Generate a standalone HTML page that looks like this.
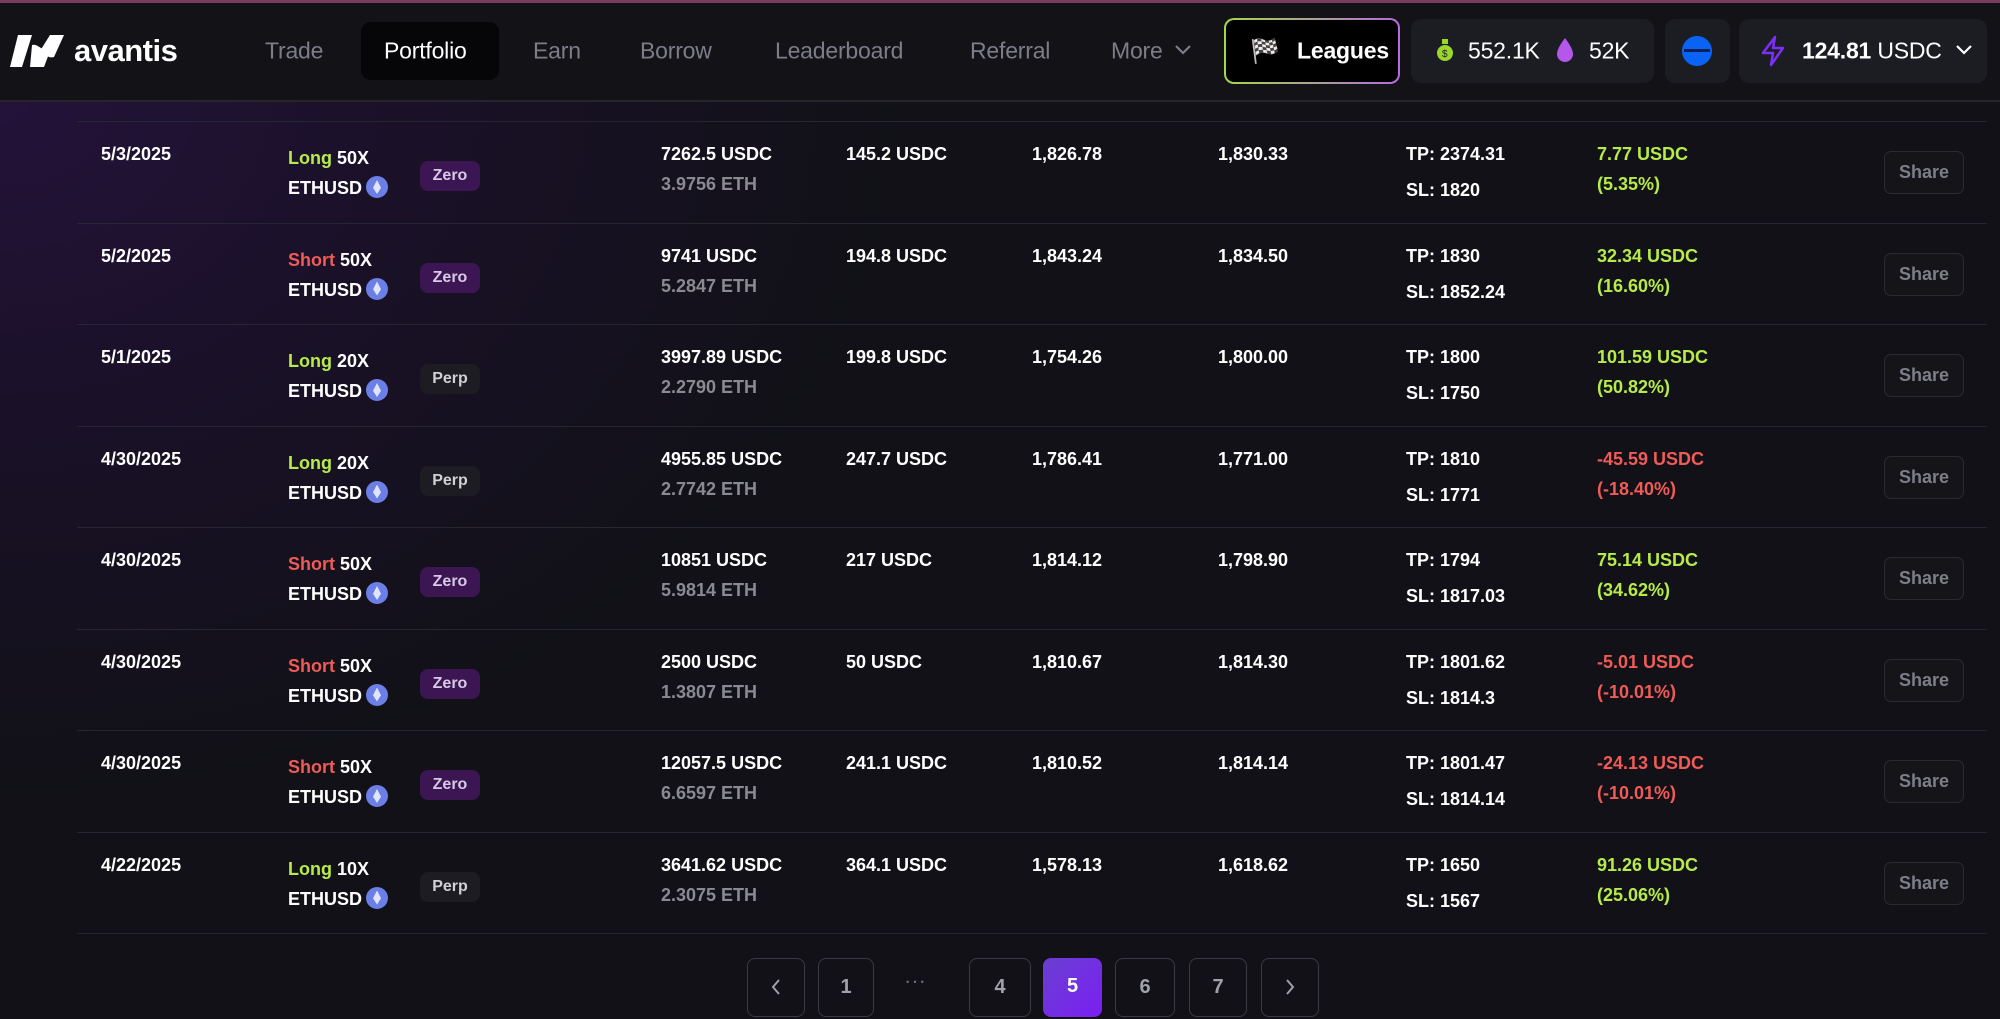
<!DOCTYPE html>
<html><head><meta charset="utf-8"><style>
*{margin:0;padding:0;box-sizing:border-box}
body{width:2000px;height:1019px;overflow:hidden;font-family:"Liberation Sans",sans-serif;color:#fff;
background:radial-gradient(ellipse 900px 700px at 0px 100px,#24123a 0%,#1a1128 45%,#111117 100%);background-color:#111117;position:relative}
.hdr{position:absolute;left:0;top:0;width:2000px;height:102px;background:#121217;border-top:3px solid #7a3a5e;border-bottom:2px solid #25252b}
.a{position:absolute}
.nav{position:absolute;top:51px;transform:translateY(-50%);font-size:23px;color:#7d7d88;letter-spacing:-0.2px}
.box{position:absolute;border-radius:10px;background:#1c1c23}
.row{position:absolute;left:77px;width:1910px;height:102px;border-top:1.5px solid #26262e}
.t{position:absolute;font-size:18px;font-weight:bold;white-space:nowrap;line-height:22px}
.g{color:#b6eb4a}.r{color:#ef5b57}.gr{color:#8a8a93}
.badge{position:absolute;left:343px;top:39px;width:60px;height:30px;border-radius:8px;font-size:16px;font-weight:bold;text-align:center;line-height:30px}
.zero{background:#3b1652;color:#d9c8e8}.perp{background:#1c1c22;color:#d0d0d6}
.eth{display:inline-block;width:22px;height:22px;border-radius:50%;background:#6b7fe6;vertical-align:-4px;margin-left:4px;position:relative}
.eth:after{content:"";position:absolute;left:7px;top:4px;width:8px;height:14px;background:#dfe4ff;clip-path:polygon(50% 0,100% 55%,50% 100%,0 55%)}
.share{position:absolute;left:1807px;top:29px;width:80px;height:43px;border:1.5px solid #2a2a31;border-radius:7px;background:#141419;color:#7e7e88;font-size:18px;font-weight:bold;text-align:center;line-height:40px}
.pg{position:absolute;top:958px;height:59px;border:1.5px solid #3a3a42;border-radius:8px;color:#a0a0aa;font-size:20px;text-align:center;line-height:56px;font-weight:bold}
</style></head><body>
<div class="hdr"></div>
<svg class="a" style="left:10px;top:35px" width="58" height="32" viewBox="0 0 58 32"><path d="M8 0h14L12 32H0z M22 10c6-2 12 8 18 6L34 32H20z M40 0h14L44 22c-6 2-10-4-14-6z" fill="#fff"/></svg>
<div class="a" style="left:74px;top:33px;font-size:31px;font-weight:bold;letter-spacing:-0.5px">avantis</div>
<div class="nav" style="left:265px">Trade</div>
<div class="box" style="left:361px;top:22px;width:138px;height:58px;background:#060608"></div>
<div class="nav" style="left:384px;color:#fff">Portfolio</div>
<div class="nav" style="left:533px">Earn</div>
<div class="nav" style="left:640px">Borrow</div>
<div class="nav" style="left:775px">Leaderboard</div>
<div class="nav" style="left:970px">Referral</div>
<div class="nav" style="left:1111px">More</div>
<svg class="a" style="left:1174px;top:44px" width="18" height="12"><path d="M2 2l7 7 7-7" stroke="#7d7d88" stroke-width="2.2" fill="none"/></svg>
<div class="a" style="left:1224px;top:18px;width:176px;height:66px;border-radius:10px;background:linear-gradient(90deg,#a3d94a,#b46be0);padding:2px"><div style="background:#000;width:100%;height:100%;border-radius:8px"></div></div>
<div class="a" style="left:1250px;top:37px;font-size:24px">🏁</div>
<div class="nav" style="left:1297px;color:#fff;font-weight:bold">Leagues</div>
<div class="box" style="left:1411px;top:19px;width:243px;height:64px"></div>
<svg class="a" style="left:1437px;top:39px" width="16" height="22"><rect x="5" y="0" width="6" height="5" fill="#9bd62c"/><ellipse cx="8" cy="14" rx="8" ry="8" fill="#9bd62c"/><text x="5" y="18" font-size="10" fill="#1c1c23" font-family="Liberation Sans">$</text></svg>
<div class="nav" style="left:1468px;color:#fff">552.1K</div>
<svg class="a" style="left:1557px;top:38px" width="16" height="24"><path d="M8 0C8 0 0 10 0 16a8 8 0 0016 0C16 10 8 0 8 0z" fill="#b457ea"/></svg>
<div class="nav" style="left:1589px;color:#fff">52K</div>
<div class="box" style="left:1665px;top:19px;width:65px;height:64px"></div>
<div class="a" style="left:1682px;top:36px;width:30px;height:30px;border-radius:50%;background:#0b63f6"><div style="margin:13px 2px 0;height:3px;background:#0a1f55"></div></div>
<div class="box" style="left:1739px;top:19px;width:248px;height:64px"></div>
<svg class="a" style="left:1760px;top:35px" width="26" height="32"><path d="M15 2L3 18h10l-2 12 12-17H13z" stroke="#7b2ff7" stroke-width="2.5" fill="none" stroke-linejoin="round"/></svg>
<div class="nav" style="left:1802px;color:#fff"><b>124.81</b> USDC</div>
<svg class="a" style="left:1955px;top:44px" width="18" height="12"><path d="M2 2l7 7 7-7" stroke="#fff" stroke-width="2.2" fill="none"/></svg>

<div class="row" style="top:121px"><div class="t" style="left:24px;top:21px">5/3/2025</div><div class="t" style="left:211px;top:25px"><span class="g">Long</span> 50X</div><div class="t" style="left:211px;top:54px">ETHUSD<span class="eth"></span></div><div class="badge zero">Zero</div><div class="t" style="left:584px;top:21px">7262.5 USDC</div><div class="t gr" style="left:584px;top:51px">3.9756 ETH</div><div class="t" style="left:769px;top:21px">145.2 USDC</div><div class="t" style="left:955px;top:21px">1,826.78</div><div class="t" style="left:1141px;top:21px">1,830.33</div><div class="t" style="left:1329px;top:21px">TP: 2374.31</div><div class="t" style="left:1329px;top:57px">SL: 1820</div><div class="t g" style="left:1520px;top:21px">7.77 USDC</div><div class="t g" style="left:1520px;top:51px">(5.35%)</div><div class="share">Share</div></div>
<div class="row" style="top:222.5px"><div class="t" style="left:24px;top:21px">5/2/2025</div><div class="t" style="left:211px;top:25px"><span class="r">Short</span> 50X</div><div class="t" style="left:211px;top:54px">ETHUSD<span class="eth"></span></div><div class="badge zero">Zero</div><div class="t" style="left:584px;top:21px">9741 USDC</div><div class="t gr" style="left:584px;top:51px">5.2847 ETH</div><div class="t" style="left:769px;top:21px">194.8 USDC</div><div class="t" style="left:955px;top:21px">1,843.24</div><div class="t" style="left:1141px;top:21px">1,834.50</div><div class="t" style="left:1329px;top:21px">TP: 1830</div><div class="t" style="left:1329px;top:57px">SL: 1852.24</div><div class="t g" style="left:1520px;top:21px">32.34 USDC</div><div class="t g" style="left:1520px;top:51px">(16.60%)</div><div class="share">Share</div></div>
<div class="row" style="top:324px"><div class="t" style="left:24px;top:21px">5/1/2025</div><div class="t" style="left:211px;top:25px"><span class="g">Long</span> 20X</div><div class="t" style="left:211px;top:54px">ETHUSD<span class="eth"></span></div><div class="badge perp">Perp</div><div class="t" style="left:584px;top:21px">3997.89 USDC</div><div class="t gr" style="left:584px;top:51px">2.2790 ETH</div><div class="t" style="left:769px;top:21px">199.8 USDC</div><div class="t" style="left:955px;top:21px">1,754.26</div><div class="t" style="left:1141px;top:21px">1,800.00</div><div class="t" style="left:1329px;top:21px">TP: 1800</div><div class="t" style="left:1329px;top:57px">SL: 1750</div><div class="t g" style="left:1520px;top:21px">101.59 USDC</div><div class="t g" style="left:1520px;top:51px">(50.82%)</div><div class="share">Share</div></div>
<div class="row" style="top:425.5px"><div class="t" style="left:24px;top:21px">4/30/2025</div><div class="t" style="left:211px;top:25px"><span class="g">Long</span> 20X</div><div class="t" style="left:211px;top:54px">ETHUSD<span class="eth"></span></div><div class="badge perp">Perp</div><div class="t" style="left:584px;top:21px">4955.85 USDC</div><div class="t gr" style="left:584px;top:51px">2.7742 ETH</div><div class="t" style="left:769px;top:21px">247.7 USDC</div><div class="t" style="left:955px;top:21px">1,786.41</div><div class="t" style="left:1141px;top:21px">1,771.00</div><div class="t" style="left:1329px;top:21px">TP: 1810</div><div class="t" style="left:1329px;top:57px">SL: 1771</div><div class="t r" style="left:1520px;top:21px">-45.59 USDC</div><div class="t r" style="left:1520px;top:51px">(-18.40%)</div><div class="share">Share</div></div>
<div class="row" style="top:527px"><div class="t" style="left:24px;top:21px">4/30/2025</div><div class="t" style="left:211px;top:25px"><span class="r">Short</span> 50X</div><div class="t" style="left:211px;top:54px">ETHUSD<span class="eth"></span></div><div class="badge zero">Zero</div><div class="t" style="left:584px;top:21px">10851 USDC</div><div class="t gr" style="left:584px;top:51px">5.9814 ETH</div><div class="t" style="left:769px;top:21px">217 USDC</div><div class="t" style="left:955px;top:21px">1,814.12</div><div class="t" style="left:1141px;top:21px">1,798.90</div><div class="t" style="left:1329px;top:21px">TP: 1794</div><div class="t" style="left:1329px;top:57px">SL: 1817.03</div><div class="t g" style="left:1520px;top:21px">75.14 USDC</div><div class="t g" style="left:1520px;top:51px">(34.62%)</div><div class="share">Share</div></div>
<div class="row" style="top:628.5px"><div class="t" style="left:24px;top:21px">4/30/2025</div><div class="t" style="left:211px;top:25px"><span class="r">Short</span> 50X</div><div class="t" style="left:211px;top:54px">ETHUSD<span class="eth"></span></div><div class="badge zero">Zero</div><div class="t" style="left:584px;top:21px">2500 USDC</div><div class="t gr" style="left:584px;top:51px">1.3807 ETH</div><div class="t" style="left:769px;top:21px">50 USDC</div><div class="t" style="left:955px;top:21px">1,810.67</div><div class="t" style="left:1141px;top:21px">1,814.30</div><div class="t" style="left:1329px;top:21px">TP: 1801.62</div><div class="t" style="left:1329px;top:57px">SL: 1814.3</div><div class="t r" style="left:1520px;top:21px">-5.01 USDC</div><div class="t r" style="left:1520px;top:51px">(-10.01%)</div><div class="share">Share</div></div>
<div class="row" style="top:730px"><div class="t" style="left:24px;top:21px">4/30/2025</div><div class="t" style="left:211px;top:25px"><span class="r">Short</span> 50X</div><div class="t" style="left:211px;top:54px">ETHUSD<span class="eth"></span></div><div class="badge zero">Zero</div><div class="t" style="left:584px;top:21px">12057.5 USDC</div><div class="t gr" style="left:584px;top:51px">6.6597 ETH</div><div class="t" style="left:769px;top:21px">241.1 USDC</div><div class="t" style="left:955px;top:21px">1,810.52</div><div class="t" style="left:1141px;top:21px">1,814.14</div><div class="t" style="left:1329px;top:21px">TP: 1801.47</div><div class="t" style="left:1329px;top:57px">SL: 1814.14</div><div class="t r" style="left:1520px;top:21px">-24.13 USDC</div><div class="t r" style="left:1520px;top:51px">(-10.01%)</div><div class="share">Share</div></div>
<div class="row" style="top:831.5px;border-bottom:1.5px solid #26262e"><div class="t" style="left:24px;top:21px">4/22/2025</div><div class="t" style="left:211px;top:25px"><span class="g">Long</span> 10X</div><div class="t" style="left:211px;top:54px">ETHUSD<span class="eth"></span></div><div class="badge perp">Perp</div><div class="t" style="left:584px;top:21px">3641.62 USDC</div><div class="t gr" style="left:584px;top:51px">2.3075 ETH</div><div class="t" style="left:769px;top:21px">364.1 USDC</div><div class="t" style="left:955px;top:21px">1,578.13</div><div class="t" style="left:1141px;top:21px">1,618.62</div><div class="t" style="left:1329px;top:21px">TP: 1650</div><div class="t" style="left:1329px;top:57px">SL: 1567</div><div class="t g" style="left:1520px;top:21px">91.26 USDC</div><div class="t g" style="left:1520px;top:51px">(25.06%)</div><div class="share">Share</div></div>

<div class="pg" style="left:747px;width:58px"><svg width="12" height="18" style="margin-top:19px"><path d="M9 2L3 9l6 7" stroke="#a0a0aa" stroke-width="2" fill="none"/></svg></div>
<div class="pg" style="left:818px;width:56px">1</div>
<div class="a" style="left:904px;top:968px;color:#6a6a74;font-size:22px">···</div>
<div class="pg" style="left:969px;width:62px">4</div>
<div class="pg" style="left:1043px;width:59px;border:none;background:linear-gradient(135deg,#6a3fd0,#7a1ff2);color:#fff">5</div>
<div class="pg" style="left:1115px;width:60px">6</div>
<div class="pg" style="left:1189px;width:58px">7</div>
<div class="pg" style="left:1261px;width:58px"><svg width="12" height="18" style="margin-top:19px"><path d="M3 2l6 7-6 7" stroke="#a0a0aa" stroke-width="2" fill="none"/></svg></div>
</body></html>
